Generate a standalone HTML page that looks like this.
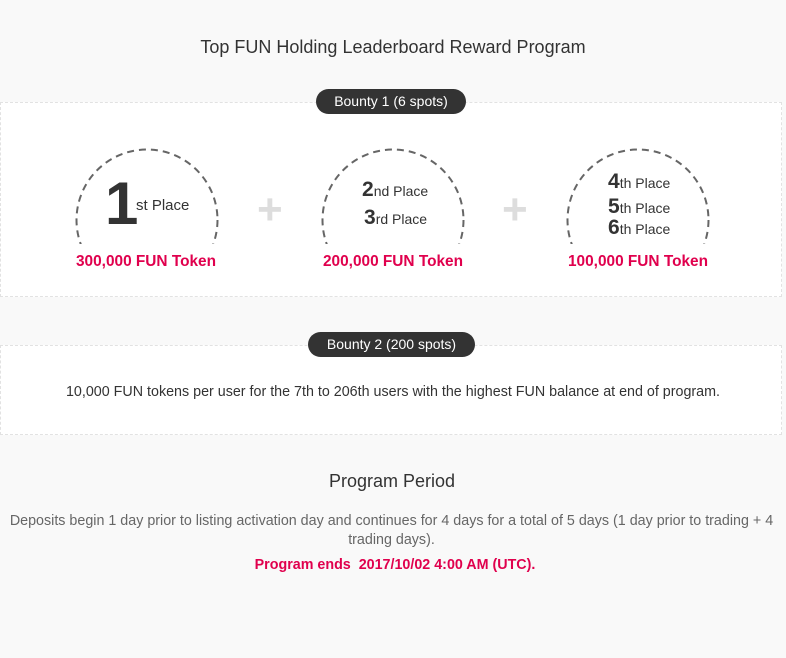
<!DOCTYPE html>
<html><head><meta charset="utf-8"><style>
body{margin:0;width:786px;height:658px;background:#f9f9f9;font-family:"Liberation Sans",Arial,sans-serif;position:relative;overflow:hidden;color:#333}
.a{position:absolute}
.box{position:absolute;left:0;width:780px;background:#fff;border:1px dashed #e2e2e2}
.pill{position:absolute;background:#333;color:#fff;font-size:14px;height:25px;line-height:25px;border-radius:13px;text-align:center}
.red{color:#e0004d;font-weight:bold;font-size:15.4px;text-align:center;position:absolute}
.plus{position:absolute;color:#ddd;font-size:44px;font-weight:bold;line-height:44px}
.pl{position:absolute;font-size:14px;color:#333;white-space:nowrap}
.pl b{font-size:21px}
</style></head><body>
<div class="a" style="left:0;width:786px;top:37px;text-align:center;font-size:18px;color:#333">Top FUN Holding Leaderboard Reward Program</div>
<div class="box" style="top:102px;height:193px"></div>
<div class="pill" style="left:316px;top:89px;width:150px">Bounty 1 (6 spots)</div>

<svg class="a" style="left:0;top:140px" width="786" height="110">
<defs><clipPath id="k"><rect x="0" y="0" width="786" height="104"/></clipPath></defs>
<g clip-path="url(#k)" fill="none" stroke="#666" stroke-width="2" stroke-dasharray="7 5">
<circle cx="147" cy="80" r="70.5"/>
<circle cx="393" cy="80" r="70.5"/>
<circle cx="638" cy="80" r="70.5"/>
</g></svg>

<div class="a" style="left:105px;top:173px;font-size:60px;font-weight:bold;line-height:62px">1</div>
<div class="pl" style="left:136px;top:197px;font-size:15px">st Place</div>
<div class="plus" style="left:257px;top:188px">+</div>
<div class="plus" style="left:502px;top:188px">+</div>

<div class="pl" style="left:362px;top:178px"><b>2</b>nd Place</div>
<div class="pl" style="left:364px;top:206px"><b>3</b>rd Place</div>

<div class="pl" style="left:608px;top:170px"><b>4</b>th Place</div>
<div class="pl" style="left:608px;top:195px"><b>5</b>th Place</div>
<div class="pl" style="left:608px;top:216px"><b>6</b>th Place</div>

<div class="red" style="left:46px;width:200px;top:253px">300,000 FUN Token</div>
<div class="red" style="left:293px;width:200px;top:253px">200,000 FUN Token</div>
<div class="red" style="left:538px;width:200px;top:253px">100,000 FUN Token</div>

<div class="box" style="top:345px;height:88px"></div>
<div class="pill" style="left:308px;top:332px;width:167px">Bounty 2 (200 spots)</div>
<div class="a" style="left:0;width:786px;top:384px;text-align:center;font-size:14.3px;color:#333">10,000 FUN tokens per user for the 7th to 206th users with the highest FUN balance at end of program.</div>

<div class="a" style="left:0;width:784px;top:471px;text-align:center;font-size:18px;color:#333">Program Period</div>
<div class="a" style="left:0;width:783px;top:512px;text-align:center;font-size:14.3px;color:#666;line-height:19px">Deposits begin 1 day prior to listing activation day and continues for 4 days for a total of 5 days (1 day prior to trading + 4<br>trading days).</div>
<div class="red" style="left:0;width:790px;top:557px;font-size:14.3px">Program ends&nbsp; 2017/10/02 4:00 AM (UTC).</div>
</body></html>
